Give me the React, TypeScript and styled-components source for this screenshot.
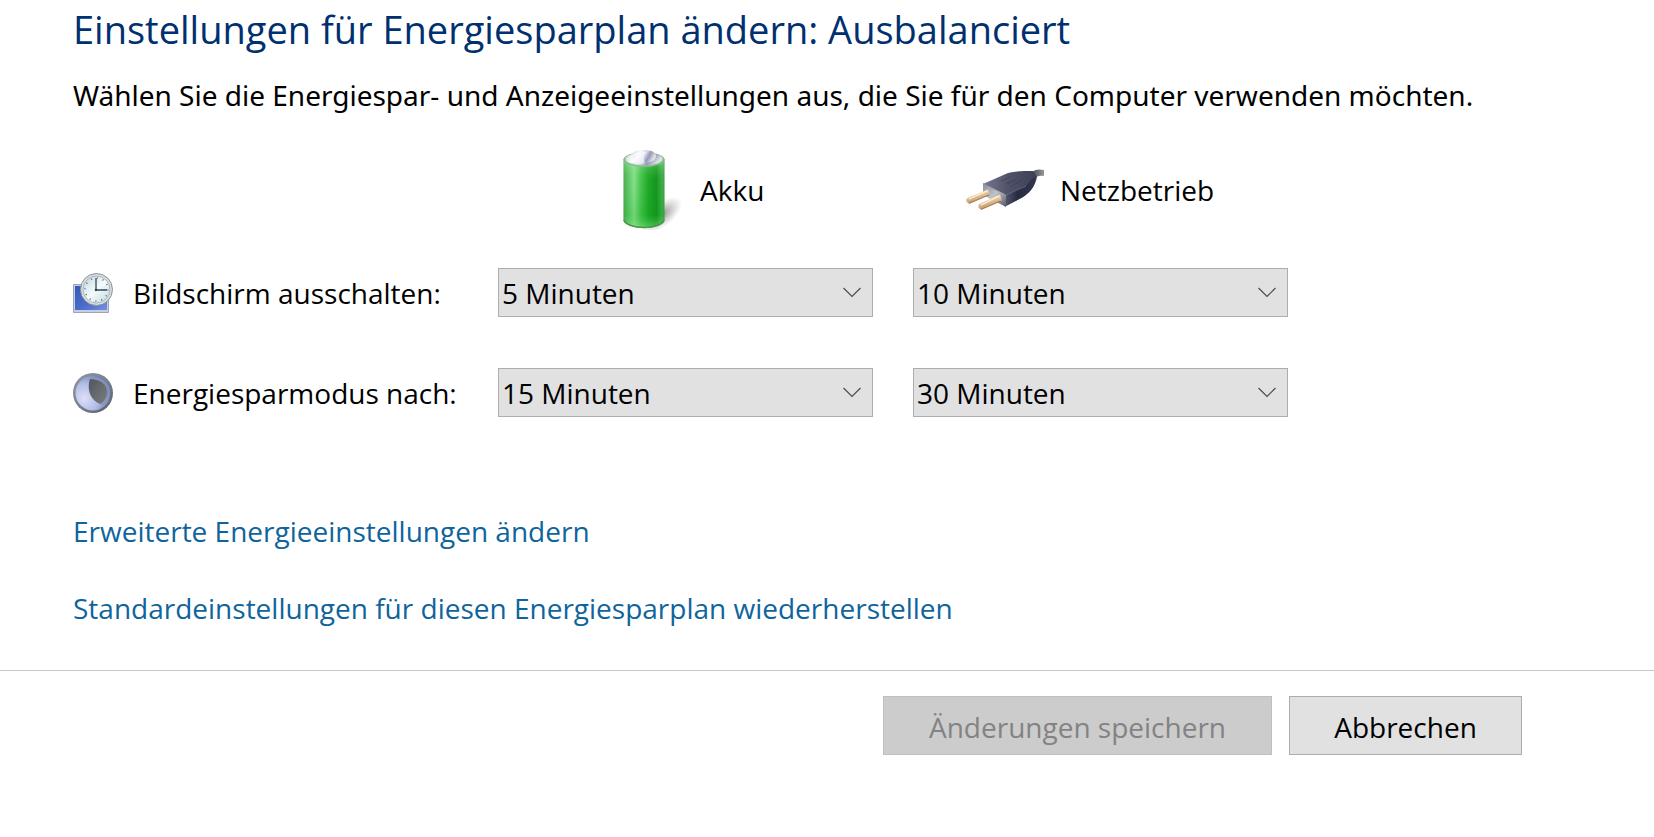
import React, { useState } from "react";
import styled, { createGlobalStyle } from "styled-components";

const GlobalStyle = createGlobalStyle`
  *, *::before, *::after {
    box-sizing: border-box;
  }
  body {
    margin: 0;
    background: #ffffff;
    color: #000000;
    font-family: "Open Sans", "Noto Sans", sans-serif;
    font-size: 28px;
    line-height: 40px;
  }
`;

const Content = styled.main`
  padding: 1px 73px 0;
`;

const Title = styled.h1`
  margin: 0;
  color: #003070;
  font-size: 38px;
  font-weight: 400;
  line-height: 56px;
`;

const Intro = styled.p`
  margin: 18px 0 0;
  font-family: "Noto Sans", "Open Sans", sans-serif;
`;

const Settings = styled.div`
  display: grid;
  grid-template-columns: 385px minmax(0, 375px) minmax(0, 375px);
  column-gap: 40px;
  row-gap: 51px;
  margin-top: 35px;
`;

const SourceHeader = styled.div<{ $column: number; $indent: number }>`
  grid-column-start: ${(p) => p.$column};
  display: flex;
  align-items: center;
  gap: 15px;
  height: 80px;
  margin-bottom: -13px;
  padding-left: ${(p) => p.$indent}px;

  svg {
    flex: none;
  }
`;

const RowLabel = styled.div`
  display: flex;
  align-items: center;
  gap: 20px;
  white-space: nowrap;

  svg {
    flex: none;
  }
`;

const SelectFrame = styled.div`
  position: relative;

  svg {
    position: absolute;
    top: 19px;
    right: 11px;
    pointer-events: none;
  }
`;

const Select = styled.select`
  appearance: none;
  display: block;
  width: 100%;
  height: 49px;
  padding: 1px 40px 0 3px;
  border: 1px solid #adadad;
  border-radius: 0;
  background: #e1e1e1;
  color: #000000;
  font: inherit;
`;

const Links = styled.nav`
  display: flex;
  flex-direction: column;
  align-items: flex-start;
  gap: 37px;
  margin-top: 94px;
`;

const Link = styled.a`
  color: #0f649c;
  text-decoration: none;

  &:hover {
    text-decoration: underline;
  }
`;

const Footer = styled.footer`
  display: flex;
  justify-content: flex-end;
  gap: 17px;
  margin-top: 42px;
  padding: 25px 132px 25px 73px;
  border-top: 1px solid #c8c8c8;
`;

const Button = styled.button<{ $width: number }>`
  width: ${(p) => p.$width}px;
  height: 59px;
  padding: 2px 0 0;
  border: 1px solid #adadad;
  border-radius: 0;
  background: #e1e1e1;
  color: #000000;
  font: inherit;

  &:disabled {
    border-color: #bfbfbf;
    background: #cccccc;
    color: #838383;
  }
`;

const BatteryIcon = () => (
  <svg width="80" height="80" viewBox="0 0 80 80" aria-hidden="true">
    <defs>
      <linearGradient id="cell" x1="0" x2="1" y1="0" y2="0">
        <stop offset="0" stopColor="#5aa55e" />
        <stop offset="0.08" stopColor="#5fc465" />
        <stop offset="0.26" stopColor="#98e89a" />
        <stop offset="0.42" stopColor="#4fc855" />
        <stop offset="0.6" stopColor="#1fa827" />
        <stop offset="0.8" stopColor="#128f1b" />
        <stop offset="0.93" stopColor="#3fae45" />
        <stop offset="1" stopColor="#4c9a52" />
      </linearGradient>
      <linearGradient id="cellDepth" x1="0" x2="0" y1="0" y2="1">
        <stop offset="0" stopColor="#b8f0b8" stopOpacity="0.45" />
        <stop offset="0.3" stopColor="#2cb035" stopOpacity="0.15" />
        <stop offset="0.8" stopColor="#10a51e" stopOpacity="0.3" />
        <stop offset="1" stopColor="#7be07c" stopOpacity="0.6" />
      </linearGradient>
      <linearGradient id="cap" x1="0" x2="1" y1="0" y2="0.3">
        <stop offset="0" stopColor="#c9cfd0" />
        <stop offset="0.35" stopColor="#f8f8fc" />
        <stop offset="0.62" stopColor="#d3d2e6" />
        <stop offset="0.78" stopColor="#9897b8" />
        <stop offset="1" stopColor="#dfe3e8" />
      </linearGradient>
      <radialGradient id="cellShadow">
        <stop offset="0" stopColor="#777777" stopOpacity="0.85" />
        <stop offset="1" stopColor="#999999" stopOpacity="0" />
      </radialGradient>
    </defs>
    <ellipse cx="56" cy="65" rx="25" ry="12" fill="url(#cellShadow)" transform="rotate(-38 56 65)" />
    <path d="M18.500 9v61c0 4 9 8 20.500 8s20.500-4 20.500-8V9z" fill="url(#cell)" />
    <path d="M18.500 9v61c0 4 9 8 20.500 8s20.500-4 20.500-8V9z" fill="url(#cellDepth)" />
    <path d="M19 70c1 4 9 7.500 20 7.500S58 74 59 70" fill="none" stroke="#4c9450" strokeWidth="1.500" />
    <ellipse cx="39" cy="9.500" rx="20.500" ry="7.500" fill="#86c08a" />
    <ellipse cx="39" cy="9" rx="18.500" ry="6.500" fill="url(#cap)" />
    <path d="M27 6c0-4 5-6 12-6s12 2 12 6-5 7-12 7-12-3-12-7z" fill="url(#cap)" />
    <path d="M24 9c1-6 9-9 18-7-3 2-4 6-2 11-7 2-15 0-16-4z" fill="#ffffff" opacity="0.55" />
  </svg>
);

const PlugIcon = () => (
  <svg width="80" height="80" viewBox="0 0 80 80" aria-hidden="true">
    <defs>
      <linearGradient id="plugTop" x1="0" x2="1" y1="0" y2="0">
        <stop offset="0" stopColor="#77798c" />
        <stop offset="0.45" stopColor="#51536a" />
        <stop offset="1" stopColor="#3b3e54" />
      </linearGradient>
      <linearGradient id="plugSide" x1="0" x2="1" y1="0" y2="0">
        <stop offset="0" stopColor="#55586f" />
        <stop offset="0.4" stopColor="#292b45" />
        <stop offset="1" stopColor="#34364c" />
      </linearGradient>
      <linearGradient id="plugFace" x1="0" x2="1" y1="0" y2="1">
        <stop offset="0" stopColor="#8b8d9d" />
        <stop offset="0.5" stopColor="#c1c1ca" />
        <stop offset="1" stopColor="#55576c" />
      </linearGradient>
      <linearGradient id="prong" x1="0" x2="0.5" y1="0" y2="1">
        <stop offset="0" stopColor="#b98d5d" />
        <stop offset="0.4" stopColor="#f8dfb8" />
        <stop offset="1" stopColor="#a97849" />
      </linearGradient>
      <linearGradient id="cord" x1="0" x2="1" y1="0" y2="0">
        <stop offset="0" stopColor="#45464f" />
        <stop offset="1" stopColor="#96969a" />
      </linearGradient>
    </defs>
    <path d="M67 22c4-3 7-3 12-2v6c-4-1-7 0-11 3z" fill="url(#cord)" />
    <path d="M18 34 43 23c8-2 16-2 25-2l4 6c-2 10-8 16-14 20L41 56l-2-12z" fill="url(#plugTop)" />
    <path d="M40 45 61 36c3-3 5-8 10-9-1 9-5 15-13 20L41 56z" fill="url(#plugSide)" />
    <path d="m18 33 23 12v12L18 45z" fill="url(#plugFace)" />
    <path d="m18 34 23 11 20-9" fill="none" stroke="#85879b" opacity="0.5" />
    <path d="M23 39.500 3 47.500c-3 1.500-2 5 1 6l21-9z" fill="url(#prong)" />
    <path d="M35 44.500 15 53.500c-3 1.500-2 5 1 6l21-9z" fill="url(#prong)" />
    <path d="M22 41 4 49M34 46 16 55" stroke="#fff0d6" strokeWidth="1.300" />
    <path d="m4 53.500 20-8.500m-8 14.500 20-8.500" stroke="#94683d" opacity="0.8" />
    <path d="m36 31 9-4m-4 7 10-4m-5 6 10-5" stroke="#363850" opacity="0.5" />
  </svg>
);

const DisplayClockIcon = () => (
  <svg width="40" height="40" viewBox="0 0 40 40" aria-hidden="true">
    <defs>
      <linearGradient id="screen" x1="0" x2="1" y1="0" y2="1">
        <stop offset="0" stopColor="#3459b5" />
        <stop offset="0.55" stopColor="#4a6dcb" />
        <stop offset="1" stopColor="#7290e0" />
      </linearGradient>
      <linearGradient id="dial" x1="0" x2="1" y1="0" y2="1">
        <stop offset="0" stopColor="#bdd3dc" />
        <stop offset="0.5" stopColor="#f5fbfb" />
        <stop offset="1" stopColor="#bdd8df" />
      </linearGradient>
    </defs>
    <path d="M.5 11.500h35v28H.5z" fill="#c8cedf" stroke="#9ba4bb" />
    <path d="M2 13h32v24H2z" fill="url(#screen)" />
    <circle cx="23.500" cy="16.500" r="16" fill="#d9dddf" stroke="#88929a" />
    <circle cx="23.500" cy="16.500" r="13.500" fill="url(#dial)" stroke="#abb7bc" />
    <circle cx="23.500" cy="16.500" r="11.500" fill="none" stroke="#586770" strokeWidth="1.500" strokeDasharray="1 5.020" />
    <path d="M23 5v12h11" fill="none" stroke="#344652" strokeWidth="1.300" />
    <circle cx="23" cy="17" r="1.300" fill="#344652" />
  </svg>
);

const MoonIcon = () => (
  <svg width="40" height="40" viewBox="0 0 40 40" aria-hidden="true">
    <defs>
      <linearGradient id="moonRim" x1="0" x2="1" y1="0" y2="1">
        <stop offset="0" stopColor="#8f959c" />
        <stop offset="0.5" stopColor="#7b828f" />
        <stop offset="1" stopColor="#585d66" />
      </linearGradient>
      <radialGradient id="moonLight" cx="0.25" cy="0.65" r="0.8">
        <stop offset="0" stopColor="#dedff8" />
        <stop offset="0.5" stopColor="#b4bee9" />
        <stop offset="1" stopColor="#697ba5" />
      </radialGradient>
      <linearGradient id="moonDark" x1="0" x2="1" y1="0" y2="1">
        <stop offset="0" stopColor="#51565f" />
        <stop offset="1" stopColor="#7c7c7c" />
      </linearGradient>
    </defs>
    <circle cx="20" cy="20" r="20" fill="url(#moonRim)" />
    <circle cx="20" cy="20" r="17.500" fill="url(#moonLight)" />
    <path d="M17 6c9 0 17 5 17 13 0 6-3 10-7 12-8-3-14-13-10-25z" fill="url(#moonDark)" />
    <path d="M19 5c10 0 17 6 17 15 0 6-3 10-8 12" fill="none" stroke="#8294be" strokeWidth="1.500" />
  </svg>
);

const Chevron = () => (
  <svg width="20" height="11" viewBox="0 0 20 11" aria-hidden="true">
    <path d="m1.500 1 8.500 8.500L18.500 1" fill="none" stroke="#4c4c4c" strokeWidth="1.200" />
  </svg>
);

const durations = ["1 Minute", "5 Minuten", "10 Minuten", "15 Minuten", "30 Minuten", "Niemals"];

function DurationSelect({ label, initial }: { label: string; initial: string }) {
  const [value, setValue] = useState(initial);
  return (
    <SelectFrame>
      <Select aria-label={label} value={value} onChange={(e) => setValue(e.target.value)}>
        {durations.map((duration) => (
          <option key={duration}>{duration}</option>
        ))}
      </Select>
      <Chevron />
    </SelectFrame>
  );
}

export default function App() {
  return (
    <>
      <GlobalStyle />
      <Content>
        <Title>Einstellungen für Energiesparplan ändern: Ausbalanciert</Title>
        <Intro>
          Wählen Sie die Energiespar- und Anzeigeeinstellungen aus, die Sie für den Computer verwenden möchten.
        </Intro>
        <Settings>
          <SourceHeader $column={2} $indent={107}>
            <BatteryIcon />
            <span>Akku</span>
          </SourceHeader>
          <SourceHeader $column={3} $indent={52}>
            <PlugIcon />
            <span>Netzbetrieb</span>
          </SourceHeader>
          <RowLabel>
            <DisplayClockIcon />
            <span>Bildschirm ausschalten:</span>
          </RowLabel>
          <DurationSelect label="Bildschirm ausschalten: Akku" initial="5 Minuten" />
          <DurationSelect label="Bildschirm ausschalten: Netzbetrieb" initial="10 Minuten" />
          <RowLabel>
            <MoonIcon />
            <span>Energiesparmodus nach:</span>
          </RowLabel>
          <DurationSelect label="Energiesparmodus nach: Akku" initial="15 Minuten" />
          <DurationSelect label="Energiesparmodus nach: Netzbetrieb" initial="30 Minuten" />
        </Settings>
        <Links>
          <Link href="#erweitert">Erweiterte Energieeinstellungen ändern</Link>
          <Link href="#standard">Standardeinstellungen für diesen Energiesparplan wiederherstellen</Link>
        </Links>
      </Content>
      <Footer>
        <Button $width={389} disabled>
          Änderungen speichern
        </Button>
        <Button $width={233}>Abbrechen</Button>
      </Footer>
    </>
  );
}
